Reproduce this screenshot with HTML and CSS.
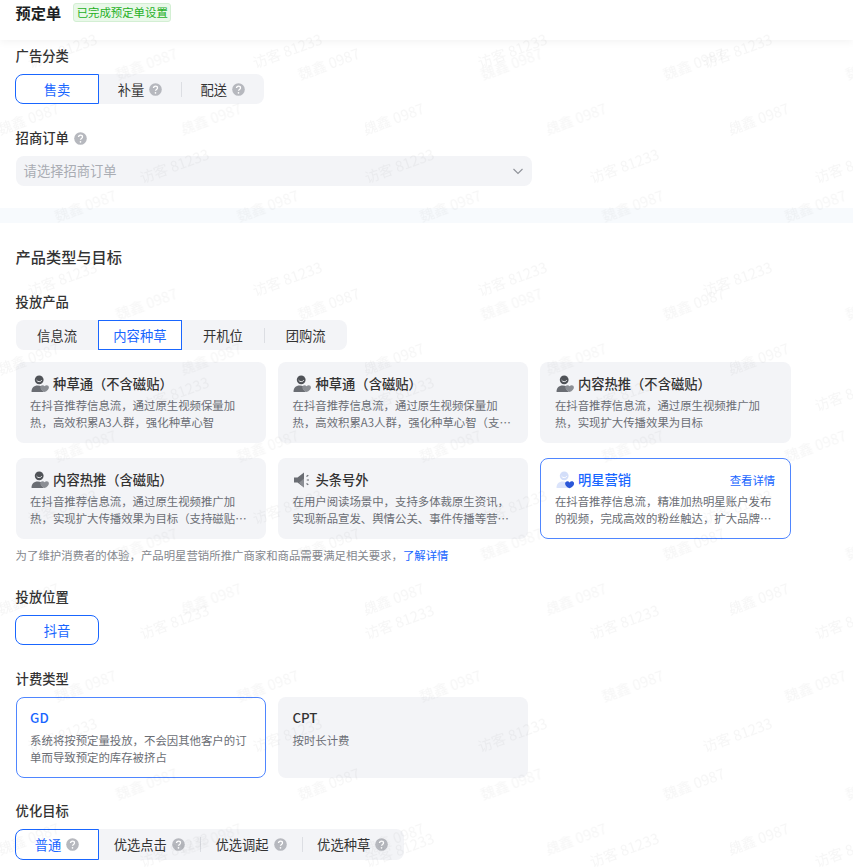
FILE: index.html
```html
<!DOCTYPE html>
<html lang="zh-CN">
<head>
<meta charset="utf-8">
<title>预定单</title>
<link rel="stylesheet" href="styles.css">
</head>
<body>
<svg width="0" height="0" class="defs">
  <defs>
    <symbol id="person" viewBox="0 0 18 18">
      <circle cx="8.2" cy="4.8" r="4.4" fill="#4f5257"/>
      <path d="M5.6 5.2c1 1.9 4.2 1.9 5.2 0" fill="none" stroke="#e6e7ea" stroke-width="1"/>
      <path d="M.6 17c-.4-4 2.2-6.6 6.2-6.6 1.400 0 2.500.3 3.400.8-.9 2 .2 4.300 3 5.800z" fill="#6a6d73"/>
      <path d="M13.600 17c-2.600-1-4.300-2.800-4.300-4.600 0-1.300 1-2.200 2.200-2.200.9 0 1.600.4 2.100 1.100.5-.7 1.200-1.100 2.100-1.100 1.200 0 2.200.9 2.200 2.200 0 1.800-1.700 3.600-4.300 4.600z" fill="#8b8e94"/>
    </symbol>
    <symbol id="star" viewBox="0 0 18 18">
      <circle cx="8.200" cy="4.800" r="4.400" fill="#d3def9"/>
      <path d="M5.600 5.200c1 1.900 4.200 1.900 5.200 0" fill="none" stroke="#fff" stroke-width="1"/>
      <path d="M.6 17c-.4-4 2.200-6.600 6.200-6.600 1.400 0 2.500.3 3.400.8-.9 2 .2 4.300 3 5.800z" fill="#dbe4fb"/>
      <path d="M13.600 17.300c-2.700-1-4.500-2.900-4.500-4.800 0-1.300 1-2.300 2.300-2.300.9 0 1.700.4 2.200 1.200.5-.8 1.300-1.200 2.200-1.200 1.300 0 2.300 1 2.300 2.300 0 1.900-1.800 3.800-4.500 4.800z" fill="#2b57d8"/>
    </symbol>
    <symbol id="horn" viewBox="0 0 18 18">
      <path d="M1 6.500h3.500L11 1.500v15L4.500 11.500H1z" fill="#6a6d73"/>
      <path d="M6 11.800l5 4.700V7.500z" fill="#8b8e94"/>
      <path d="M13.500 5.500l1.800-1.300M13.800 9h2.200M13.500 12.500l1.800 1.300" fill="none" stroke="#6a6d73" stroke-width="1.200"/>
    </symbol>
    <symbol id="help" viewBox="0 0 13 13">
      <circle cx="6.500" cy="6.500" r="6.300" fill="#b6b8be"/>
      <path d="M4.500 5.100c0-1.200.9-1.900 2-1.900s2 .7 2 1.700c0 1.500-2 1.500-2 2.900" fill="none" stroke="#fff" stroke-width="1.300"/>
      <circle cx="6.500" cy="9.800" r=".85" fill="#fff"/>
    </symbol>
  </defs>
</svg>

<header class="topbar">
  <h1 class="page-title">预定单</h1>
  <span class="status-tag">已完成预定单设置</span>
</header>

<section class="panel panel-first">
  <div class="field-label">广告分类</div>
  <div class="seg">
    <div class="seg-item active first">售卖</div>
    <div class="seg-item">补量<svg class="help"><use href="#help"/></svg></div>
    <div class="seg-item sep">配送<svg class="help"><use href="#help"/></svg></div>
  </div>
  <div class="field-label spaced">招商订单<svg class="help"><use href="#help"/></svg></div>
  <div class="select">
    <span>请选择招商订单</span>
    <svg class="chevron" viewBox="0 0 12 12"><path d="M1.500 4l4.500 4.500L10.500 4" fill="none" stroke="#8f9299" stroke-width="1.100"/></svg>
  </div>
</section>

<div class="band"></div>

<section class="panel panel-main">
  <h2 class="section-title">产品类型与目标</h2>
  <div class="field-label">投放产品</div>
  <div class="seg">
    <div class="seg-item">信息流</div>
    <div class="seg-item active">内容种草</div>
    <div class="seg-item">开机位</div>
    <div class="seg-item sep">团购流</div>
  </div>
  <div class="cards">
    <article class="card">
      <div class="card-head"><svg class="card-icon"><use href="#person"/></svg><span class="card-title">种草通（不含磁贴）</span></div>
      <p class="card-desc">在抖音推荐信息流，通过原生视频保量加热，高效积累A3人群，强化种草心智</p>
    </article>
    <article class="card">
      <div class="card-head"><svg class="card-icon"><use href="#person"/></svg><span class="card-title">种草通（含磁贴）</span></div>
      <p class="card-desc">在抖音推荐信息流，通过原生视频保量加热，高效积累A3人群，强化种草心智（支持磁贴样式）</p>
    </article>
    <article class="card">
      <div class="card-head"><svg class="card-icon"><use href="#person"/></svg><span class="card-title">内容热推（不含磁贴）</span></div>
      <p class="card-desc">在抖音推荐信息流，通过原生视频推广加热，实现扩大传播效果为目标</p>
    </article>
    <article class="card">
      <div class="card-head"><svg class="card-icon"><use href="#person"/></svg><span class="card-title">内容热推（含磁贴）</span></div>
      <p class="card-desc">在抖音推荐信息流，通过原生视频推广加热，实现扩大传播效果为目标（支持磁贴样式投放）</p>
    </article>
    <article class="card">
      <div class="card-head"><svg class="card-icon"><use href="#horn"/></svg><span class="card-title">头条号外</span></div>
      <p class="card-desc">在用户阅读场景中，支持多体裁原生资讯，实现新品宣发、舆情公关、事件传播等营销诉求的投放</p>
    </article>
    <article class="card selected">
      <div class="card-head"><svg class="card-icon"><use href="#star"/></svg><span class="card-title">明星营销</span><a class="card-link">查看详情</a></div>
      <p class="card-desc">在抖音推荐信息流，精准加热明星账户发布的视频，完成高效的粉丝触达，扩大品牌影响力与声量</p>
    </article>
  </div>
  <p class="note">为了维护消费者的体验，产品明星营销所推广商家和商品需要满足相关要求，<a class="note-link">了解详情</a></p>

  <div class="field-label spaced">投放位置</div>
  <div class="seg plain">
    <div class="seg-item active round">抖音</div>
  </div>

  <div class="field-label spaced">计费类型</div>
  <div class="cards billing">
    <article class="card selected">
      <div class="card-head"><span class="card-title">GD</span></div>
      <p class="card-desc">系统将按预定量投放，不会因其他客户的订单而导致预定的库存被挤占</p>
    </article>
    <article class="card">
      <div class="card-head"><span class="card-title">CPT</span></div>
      <p class="card-desc">按时长计费</p>
    </article>
  </div>

  <div class="field-label spaced-sm">优化目标</div>
  <div class="seg">
    <div class="seg-item active first">普通<svg class="help"><use href="#help"/></svg></div>
    <div class="seg-item wide">优选点击<svg class="help"><use href="#help"/></svg></div>
    <div class="seg-item wide sep">优选调起<svg class="help"><use href="#help"/></svg></div>
    <div class="seg-item wide sep">优选种草<svg class="help"><use href="#help"/></svg></div>
  </div>
</section>

<svg class="watermark" aria-hidden="true">
  <defs>
    <pattern id="wm-a" width="225" height="228" patternUnits="userSpaceOnUse">
      <text class="wm-text" transform="translate(62 50) rotate(-20)">访客 81233</text>
      <text class="wm-text" transform="translate(174 165) rotate(-20)">访客 81233</text>
    </pattern>
    <pattern id="wm-b" width="182.500" height="240" patternUnits="userSpaceOnUse">
      <text class="wm-text" transform="translate(146 63) rotate(-20)">魏鑫 0987</text>
      <text class="wm-text" transform="translate(28 118) rotate(-20)">魏鑫 0987</text>
      <text class="wm-text" transform="translate(85 205) rotate(-20)">魏鑫 0987</text>
    </pattern>
  </defs>
  <rect width="100%" height="100%" fill="url(#wm-a)"/>
  <rect width="100%" height="100%" fill="url(#wm-b)"/>
</svg>
</body>
</html>
```

FILE: styles.css
```css
* { box-sizing: border-box; }
html, body { margin: 0; padding: 0; height: 868px; overflow: hidden; background: #fff; }
body {
  position: relative;
  font-family: "Noto Sans CJK SC", "Liberation Sans", sans-serif;
  color: #333;
  font-size: 13.3px;
}
.defs { position: absolute; }

.topbar {
  height: 40px;
  padding: 3px 15.600px 0;
  display: flex;
  align-items: flex-start;
  gap: 12px;
  background: #fff;
  box-shadow: 0 2px 8px rgba(0, 0, 0, .05);
  position: relative;
}
.page-title { margin: 0; font-size: 15.2px; font-weight: 600; line-height: 19px; color: #1c1f23; }
.status-tag {
  height: 19px;
  padding: 0 2.500px;
  border: 1px solid #d3efd3;
  border-radius: 3px;
  background: #e9f8e9;
  color: #25b01f;
  font-size: 11.4px;
  line-height: 17px;
}

.panel { padding: 0 15.600px; }
.panel-first { padding-top: 6px; height: 168px; }
.panel-main { padding-top: 23px; }

.field-label {
  height: 20px;
  line-height: 20px;
  margin-bottom: 8px;
  font-weight: 500;
  color: #333;
  display: flex;
  align-items: center;
  gap: 5px;
}
.spaced { margin-top: 24px; }
.spaced-sm { margin-top: 23px; }

.help { width: 13px; height: 13px; flex: none; }

.seg {
  display: inline-flex;
  height: 30.400px;
  background: #f3f4f7;
  border-radius: 8px;
  vertical-align: top;
}
.seg.plain { background: transparent; display: flex; }
.seg-item {
  position: relative;
  width: 82.900px;
  display: flex;
  align-items: center;
  justify-content: center;
  gap: 5px;
  color: #333;
}
.seg-item.wide { width: 101.700px; }
.seg-item.sep::before {
  content: "";
  position: absolute;
  left: 0;
  top: 8px;
  height: 15px;
  width: 1px;
  background: #dcdee3;
}
.seg-item.active {
  width: 83.900px;
  margin: 0 -.500px;
  background: #fff;
  border: 1px solid #1966ff;
  color: #1966ff;
}
.seg-item.first { border-radius: 8px 0 0 8px; }
.seg-item.round { border-radius: 8px; }

.select {
  height: 29.500px;
  border-radius: 8px;
  width: 516.400px;
  background: #f3f4f7;
  color: #a9acb3;
  padding: 0 8px 2px;
  display: flex;
  align-items: center;
  justify-content: space-between;
}
.chevron { width: 12px; height: 12px; margin-top: 2px; }

.band { height: 15px; background: #f7fafd; }

.section-title { margin: 0 0 26px; height: 20px; line-height: 20px; font-size: 15.2px; font-weight: 500; color: #333; }

.cards {
  display: grid;
  grid-template-columns: repeat(3, 250.400px);
  gap: 15.200px 12px;
}
.seg + .cards { margin-top: 11.400px; }
.card {
  height: 81px;
  padding: 12px 14.500px 0;
  background: #f3f4f7;
  border-radius: 8px;
  min-width: 0;
}
.card.selected { background: #fff; border: 1px solid #4f86ff; padding: 11px 13.500px 0; }
.card-head {
  height: 20px;
  display: flex;
  align-items: center;
  gap: 4px;
}
.card-icon { width: 18px; height: 18px; flex: none; margin-left: 1px; }
.card-title { font-weight: 500; color: #333; line-height: 20px; }
.selected .card-title { color: #1966ff; }
.card-link { margin-left: auto; color: #1966ff; font-size: 11.400px; margin-right: 1px; }
.card-desc {
  margin: 3px 0 0;
  font-size: 11.400px;
  line-height: 16.800px;
  color: #6b6e75;
  display: -webkit-box;
  -webkit-box-orient: vertical;
  -webkit-line-clamp: 2;
  overflow: hidden;
}
.billing .card { padding-top: 11px; }
.billing .card.selected { padding-top: 10px; }
.billing .card-desc { margin-top: 4px; }
.note { margin: 8px 0 0; font-size: 11.400px; line-height: 16px; color: #85888e; }
.note-link { color: #1966ff; }

.watermark {
  position: absolute;
  left: 0;
  top: 0;
  width: 100%;
  height: 100%;
  pointer-events: none;
}
.wm-text {
  font-family: "Noto Sans CJK SC", "Liberation Sans", sans-serif;
  font-size: 14.500px;
  fill: rgba(0, 0, 0, .035);
  text-anchor: middle;
  dominant-baseline: central;
}
```
